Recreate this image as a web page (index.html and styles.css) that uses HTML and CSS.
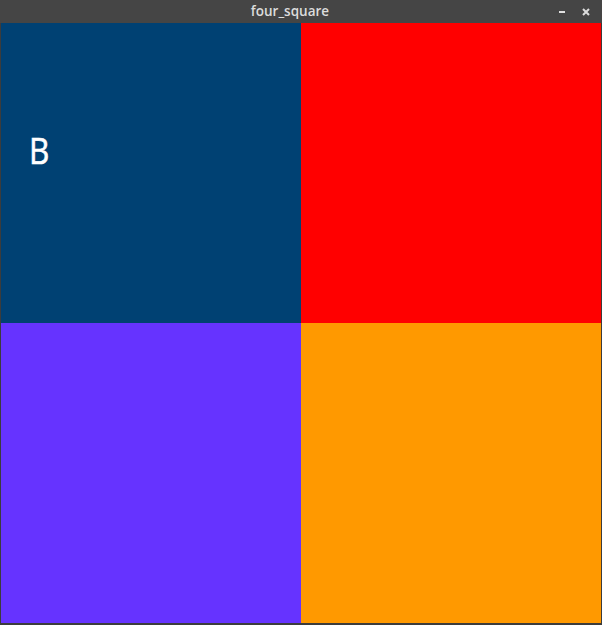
FILE: index.html
```html
<!DOCTYPE html>
<html>
<head>
<meta charset="utf-8">
<link rel="stylesheet" href="styles.css">
</head>
<body>
<div class="window">
  <div class="titlebar">
    <span class="title">four_square</span>
    <div class="controls">
      <span class="min"></span>
      <svg class="close" width="8" height="8" viewBox="0 0 8 8"><path d="M1 1 L7 7 M7 1 L1 7" stroke="#dcdcdc" stroke-width="2"/></svg>
    </div>
  </div>
  <div class="grid">
    <div class="sq blue"><span class="letter">B</span></div>
    <div class="sq red"></div>
    <div class="sq purple"></div>
    <div class="sq orange"></div>
  </div>
</div>
</body>
</html>
```
FILE: styles.css
```css
html, body { margin: 0; padding: 0; background: #3c3c3c; }
.window {
  width: 602px;
  height: 625px;
  box-sizing: border-box;
  border-left: 1px solid #3c3c3c;
  border-right: 1px solid #3c3c3c;
  border-bottom: 2px solid #3c3c3c;
  display: flex;
  flex-direction: column;
}
.titlebar {
  height: 23px;
  background: #454545;
  position: relative;
  display: flex;
  align-items: center;
  justify-content: center;
  margin: 0 -1px;
  padding-right: 22px;
}
.title {
  font-family: "Open Sans", "DejaVu Sans", sans-serif;
  font-size: 13.5px;
  font-weight: 600;
  color: #dcdcdc;
  line-height: 23px;
}
.controls {
  position: absolute;
  right: 12px;
  top: 0;
  height: 23px;
  display: flex;
  align-items: center;
  gap: 17px;
}
.min {
  width: 6px;
  height: 2px;
  background: #e0e0e0;
}
.close { display: block; }
.grid {
  display: grid;
  grid-template-columns: 300px 300px;
  grid-template-rows: 300px 300px;
}
.sq { position: relative; }
.blue { background: #004173; }
.red { background: #ff0000; }
.purple { background: #6633ff; }
.orange { background: #ff9900; }
.letter {
  display: inline-block;
  margin: 102px 0 0 28px;
  font-family: "Open Sans", "DejaVu Sans", sans-serif;
  font-size: 37px;
  font-weight: 400;
  line-height: 50px;
  color: #ffffff;
  -webkit-text-stroke: 0.6px #ffffff;
  transform: scaleX(0.85);
  transform-origin: left center;
}
```
